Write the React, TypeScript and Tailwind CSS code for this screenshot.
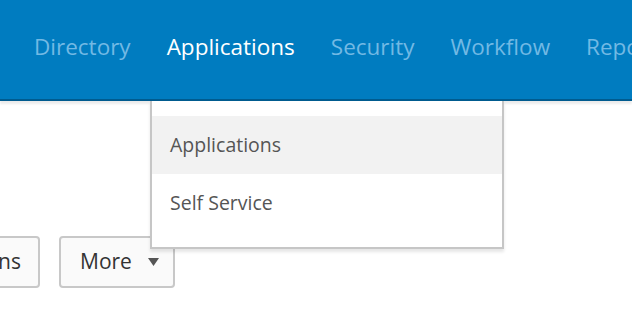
import { useState } from "react";

const navItems = ["Directory", "Applications", "Security", "Workflow", "Reports"];

const App = () => {
  const [active] = useState("Applications");

  return (
    <div className="relative h-[317px] w-[632px] overflow-hidden bg-white font-['Open_Sans',sans-serif]">
      {/* top nav */}
      <div className="relative z-10 h-[101px] border-b-2 border-[#005b8f] bg-[#007cc0] shadow-[0_3px_2px_rgba(0,0,0,0.08)]">
        <div className="flex h-full items-center whitespace-nowrap pb-[6px] text-[22.5px]">
          <div className="flex w-[3px] justify-end overflow-hidden text-[#72b9e4]">Dashboard</div>
          <div className="flex pl-[16px]">
            {navItems.map((item) => (
              <span
                key={item}
                className={
                  "px-[18px] " + (item === active ? "text-white" : "text-[#72b9e4]")
                }
              >
                {item}
              </span>
            ))}
          </div>
        </div>
      </div>

      {/* dropdown menu */}
      <div className="absolute left-[150px] top-[101px] z-20 h-[148px] w-[354px] border-2 border-t-0 border-[#c6c6c6] bg-white pt-[15px] shadow-[0_3px_3px_rgba(0,0,0,0.1)]">
        <div className="flex h-[58px] items-center bg-[#f2f2f2] pl-[18px] text-[19.5px] text-[#555555]">
          Applications
        </div>
        <div className="flex h-[58px] items-center pl-[18px] text-[19.5px] text-[#555555]">
          Self Service
        </div>
      </div>

      {/* toolbar buttons */}
      <div className="mt-[135px] flex gap-[19px]">
        <button className="-ml-[91px] flex h-[52px] w-[131px] items-center justify-end overflow-hidden whitespace-nowrap rounded-[4px] border-2 border-[#c8c8c8] bg-[#fafafa] pr-[17px] text-[21px] text-[#333333]">
          Applications
        </button>
        <button className="flex h-[52px] w-[116px] items-center rounded-[4px] border-2 border-[#c8c8c8] bg-[#fafafa] pl-[19px] text-[21px] text-[#333333]">
          More
          <svg className="ml-[16px]" width="11" height="8" viewBox="0 0 11 8">
            <path d="M0 0 L11 0 L5.5 8 Z" fill="#555555" />
          </svg>
        </button>
      </div>
    </div>
  );
};

export default App;
